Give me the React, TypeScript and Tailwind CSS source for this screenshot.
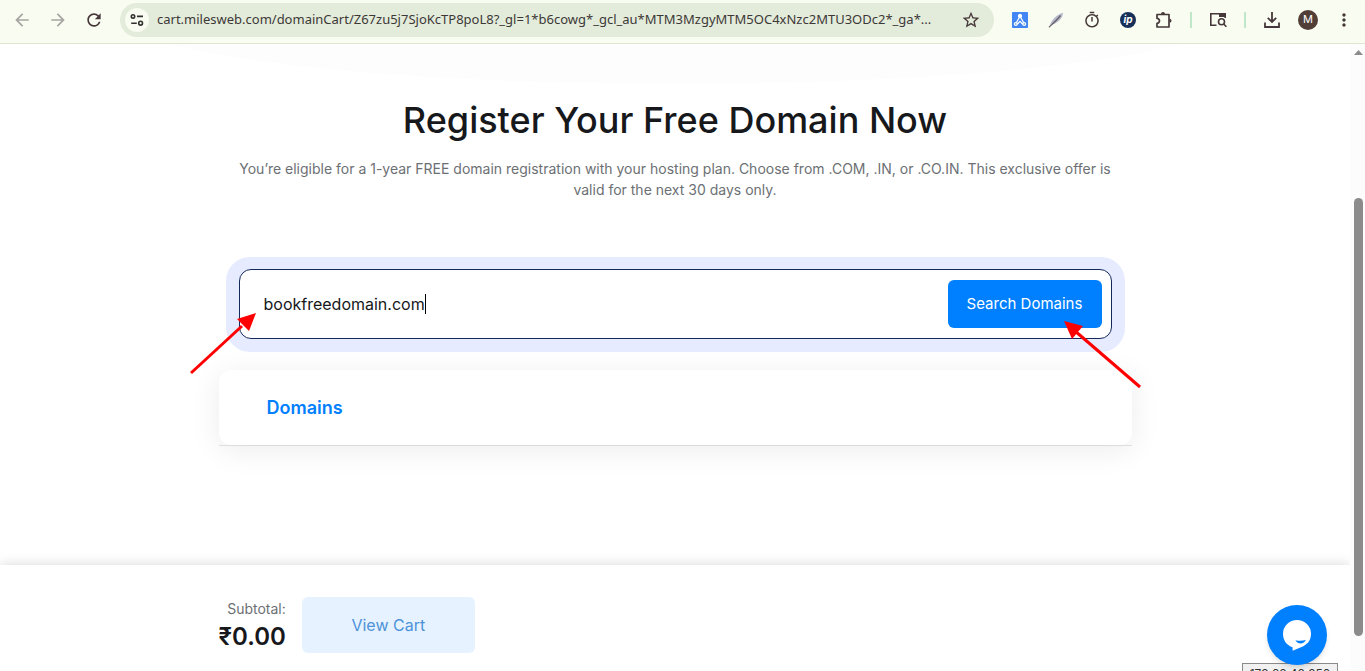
import { useState } from "react";
import { MdArrowBack, MdArrowForward, MdMoreVert, MdOutlineTimer, MdRefresh, MdStarBorder } from "react-icons/md";

const PAGE_URL =
  "cart.milesweb.com/domainCart/Z67zu5j7SjoKcTP8poL8?_gl=1*b6cowg*_gcl_au*MTM3MzgyMTM5OC4xNzc2MTU3ODc2*_ga*...";

function SiteInfoIcon() {
  return (
    <svg width="14" height="14" viewBox="0 0 14 14" fill="none" stroke="#33312f" strokeWidth="1.6">
      <circle cx="3" cy="3.4" r="1.7" />
      <path d="M7 3.4h6M1.2 10.2h5.6" />
      <circle cx="10.6" cy="10.2" r="1.9" />
    </svg>
  );
}

function NetworkIcon() {
  return (
    <svg width="16" height="16" viewBox="0 0 16 16">
      <rect width="16" height="16" rx="1" fill="#4285f4" />
      <g fill="none" stroke="#fff" strokeWidth="1.3">
        <path d="M7.3 5.5 4.4 10.5M8.7 5.5l2.9 5M5.2 12.3 8 9.400l2.800 2.900" />
        <circle cx="8" cy="4" r="1.5" fill="#fff" />
        <circle cx="3.8" cy="12" r="1.4" />
        <circle cx="12.2" cy="12" r="1.4" />
      </g>
    </svg>
  );
}

function FeatherIcon() {
  return (
    <svg width="16" height="16" viewBox="0 0 16 16">
      <path d="M2 13.5C3 8 9 2.5 15 .8c-.3 5-4 9.700-10 11.400Z" fill="#b4bacb" />
      <path d="M1 15.200C5 11.500 9 8 12.500 3.500" fill="none" stroke="#6b6068" strokeWidth="1.300" />
    </svg>
  );
}

function ExtensionsIcon() {
  return (
    <svg width="18" height="18" viewBox="0 0 18 18">
      <path
        d="M2 3.500h12v12.500H2v-3.700a2.500 2.500 0 0 0 0-5Z"
        fill="none"
        stroke="#46383a"
        strokeWidth="1.700"
        strokeLinejoin="round"
      />
      <path d="M6 3a2 2 0 0 1 4 0ZM14.500 7.700a2 2 0 0 1 0 4Z" fill="#46383a" />
    </svg>
  );
}

function TabSearchIcon() {
  return (
    <svg width="18" height="16" viewBox="0 0 18 16" fill="none" stroke="#46383a" strokeWidth="1.6">
      <path d="M7.5 13.2H1.800V1.800h14.400V6" />
      <path d="M10 3.2h7" strokeWidth="3.600" />
      <circle cx="12.500" cy="9.800" r="3" />
      <path d="m14.700 12 2.700 2.800" />
    </svg>
  );
}

function DownloadIcon() {
  return (
    <svg width="16" height="16" viewBox="0 0 16 16" fill="none" stroke="#46383a" strokeWidth="1.8">
      <path d="M8 0v9.5M3.800 5.800 8 10l4.200-4.200M1 10.500V15h14v-4.500" />
    </svg>
  );
}

function ChatIcon() {
  return (
    <svg width="28" height="31" viewBox="0 0 28 31">
      <path
        d="M14 0a14 14 0 0 1 14 14c0 7-4.500 11-9.500 13L9.600 30.800V27.200C4 25.500 0 20.500 0 14A14 14 0 0 1 14 0Z"
        fill="#fff"
      />
      <path d="M12.500 20.300q5.300 1.200 10.300-.3c-1.700 4.500-8 4.700-10.300.3Z" fill="#007fff" />
    </svg>
  );
}

function BrowserBar() {
  return (
    <header className="flex h-11 shrink-0 items-center border-b border-[#dfe5d2] bg-[#f9fcf1] pb-1 text-[#46383a]">
      <nav className="flex shrink-0 items-center gap-4 pl-3">
        <button aria-label="Back" className="text-[#a6a5a2]">
          <MdArrowBack size={20} />
        </button>
        <button aria-label="Forward" className="text-[#a6a5a2]">
          <MdArrowForward size={20} />
        </button>
        <button aria-label="Reload">
          <MdRefresh size={20} />
        </button>
      </nav>
      <div className="ml-4 flex h-[34px] min-w-0 flex-1 items-center rounded-full bg-[#e3ecda] px-[5px]">
        <button
          aria-label="Site information"
          className="flex size-6 shrink-0 items-center justify-center rounded-full bg-[#f9fcf1]"
        >
          <SiteInfoIcon />
        </button>
        <input
          aria-label="Address"
          readOnly
          value={PAGE_URL}
          className="ml-2 min-w-0 flex-1 bg-transparent font-['Noto_Sans',sans-serif] text-[13px] text-[#3d3838] outline-none"
        />
        <button aria-label="Bookmark" className="mx-2">
          <MdStarBorder size={20} />
        </button>
      </div>
      <div className="flex shrink-0 items-center gap-4 pr-[11px] pl-4">
        <button aria-label="Site map" className="flex size-5 items-center justify-center">
          <NetworkIcon />
        </button>
        <button aria-label="Editor" className="flex size-5 items-center justify-center">
          <FeatherIcon />
        </button>
        <button aria-label="Timer" className="flex size-5 items-center justify-center">
          <MdOutlineTimer size={18} />
        </button>
        <button aria-label="IP lookup" className="flex size-5 items-center justify-center">
          <span className="flex size-4 items-center justify-center rounded-full bg-[#173059] text-[10px] font-bold text-white italic">
            ip
          </span>
        </button>
        <button aria-label="Extensions" className="flex size-5 items-center justify-center">
          <ExtensionsIcon />
        </button>
        <div className="h-4 w-[2px] bg-[#bfe8cb]" />
        <button aria-label="Search tabs" className="flex size-5 items-center justify-center">
          <TabSearchIcon />
        </button>
        <div className="h-4 w-[2px] bg-[#bfe8cb]" />
        <button aria-label="Downloads" className="flex size-5 items-center justify-center">
          <DownloadIcon />
        </button>
        <button
          aria-label="Profile"
          className="flex size-5 items-center justify-center rounded-full bg-[#503e37] text-[11px] text-white"
        >
          M
        </button>
        <button aria-label="Menu" className="flex w-5 justify-center">
          <MdMoreVert size={20} />
        </button>
      </div>
    </header>
  );
}

function SearchForm() {
  const [domain, setDomain] = useState("bookfreedomain.com");

  return (
    <form
      onSubmit={(e) => e.preventDefault()}
      className="relative mx-[7px] rounded-3xl bg-[#e6ebff] px-[13px] pt-3 pb-[13px]"
    >
      <div className="flex h-[70px] items-center rounded-xl border border-[#142a5c] bg-white pr-[9px] pl-6">
        <label className="flex min-w-0 flex-1 cursor-text items-center">
          <input
            aria-label="Domain name"
            value={domain}
            onChange={(e) => setDomain(e.target.value)}
            className="field-sizing-content bg-transparent text-base text-[#16181b] caret-transparent outline-none"
          />
          <span className="h-5 w-px bg-black" />
        </label>
        <button className="h-12 w-[154px] rounded-md bg-[#007fff] text-[15px] text-white">
          Search Domains
        </button>
      </div>

      <svg
        className="pointer-events-none absolute top-14 -left-9"
        width="68"
        height="62"
        viewBox="0 0 68 62"
      >
        <path d="M1 60 52 13" stroke="#f00" strokeWidth="3" />
        <path d="M66 0 47 6l12 12Z" fill="#f00" />
      </svg>
      <svg
        className="pointer-events-none absolute top-16 -right-4"
        width="78"
        height="68"
        viewBox="0 0 78 68"
      >
        <path d="M77 66 12 10" stroke="#f00" strokeWidth="3" />
        <path d="m1 0 19 5L9 18Z" fill="#f00" />
      </svg>
    </form>
  );
}

export default function App() {
  return (
    <div className="flex h-screen flex-col overflow-hidden bg-white font-[Inter,sans-serif]">
      <BrowserBar />
      <div className="flex min-h-0 flex-1">
        <div className="relative flex min-w-0 flex-1 flex-col overflow-hidden">
          <div className="absolute inset-x-[9%] -top-24 h-34 rounded-[50%] bg-[#fdfdfd]" />

          <main className="relative mx-auto w-full max-w-[913px] flex-1 pt-12">
            <h1 className="text-center text-4xl leading-14 font-medium text-[#16181b]">
              Register Your Free Domain Now
            </h1>
            <p className="mt-[10px] px-4 text-center text-sm leading-[21px] text-[#6c7074]">
              You’re eligible for a 1-year FREE domain registration with your hosting plan. Choose
              from .COM, .IN, or .CO.IN. This exclusive offer is valid for the next 30 days only.
            </p>
            <div className="mt-[57px]">
              <SearchForm />
            </div>
            <div className="mt-[18px] border-b border-[#e6e6e6]">
              <section className="rounded-xl bg-white px-12 py-6 shadow-[0_5px_30px_rgba(0,0,0,0.08)]">
                <h2 className="text-lg leading-[27px] font-semibold text-[#007fff]">Domains</h2>
              </section>
            </div>
          </main>

          <footer className="relative h-[106px] shrink-0 bg-white shadow-[0_0_12px_rgba(0,0,0,0.16)]">
            <div className="mx-auto flex w-full max-w-[913px] items-center gap-4 pt-8">
              <div className="text-right">
                <p className="text-sm leading-6 text-[#6c7074]">Subtotal:</p>
                <p className="text-2xl leading-8 font-semibold text-[#16181b]">₹0.00</p>
              </div>
              <button className="h-14 w-[173px] rounded-md bg-[#e6f2ff] text-base text-[#4d93d9]">
                View Cart
              </button>
            </div>
          </footer>

          <div className="absolute right-3 -bottom-3 h-5 w-24 border border-[#8a8a8a] bg-[#f1f1f1] text-center text-xs leading-5 text-[#333]">
            172.68.48.250
          </div>
          <button
            aria-label="Open chat"
            className="absolute right-[23px] bottom-[6px] flex size-15 items-center justify-center rounded-full bg-[#007fff] shadow-md"
          >
            <ChatIcon />
          </button>
        </div>

        <div className="flex w-[15px] shrink-0 flex-col items-center bg-[#fcfcfc] pl-[2px]">
          <svg className="mt-1 shrink-0" width="9" height="8" viewBox="0 0 9 8">
            <path d="M0 7 4.500 2 9 7Z" fill="#8b8b8b" />
          </svg>
          <div className="mt-[142px] h-[438px] w-[9px] rounded-full bg-[#8b8b8b]" />
        </div>
      </div>
    </div>
  );
}
